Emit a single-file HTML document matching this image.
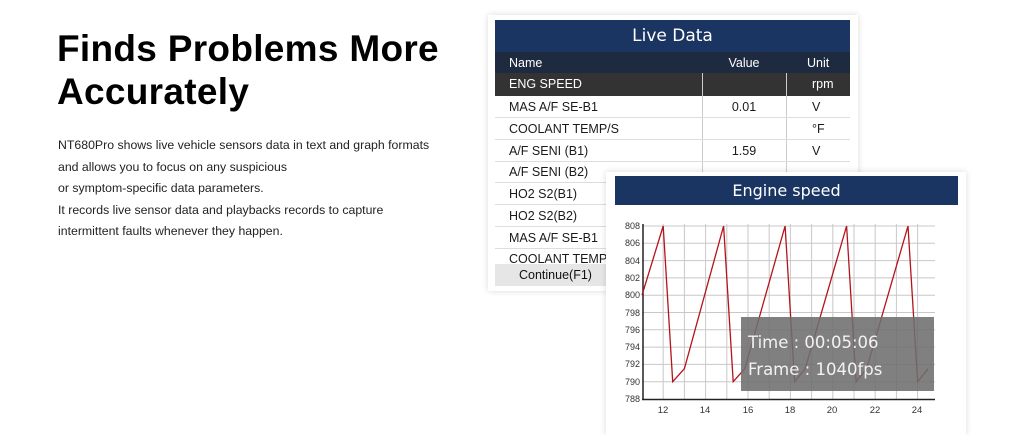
<!DOCTYPE html>
<html><head><meta charset="utf-8"><style>
*{margin:0;padding:0;box-sizing:border-box}
body{width:1024px;height:435px;background:#fff;font-family:"Liberation Sans","DejaVu Sans",sans-serif;position:relative;overflow:hidden;color:#111}
h1{position:absolute;left:57px;top:27px;font-size:37px;line-height:43px;font-weight:bold;color:#000;letter-spacing:0.3px}
.p{position:absolute;left:58px;top:135px;font-size:12.3px;line-height:21.5px;color:#222}
.card1{position:absolute;left:488px;top:15px;width:370px;height:276px;background:#fff;box-shadow:0 0 6px rgba(0,0,0,.15)}
.hd{position:absolute;left:495px;top:20px;width:355px;height:32px;background:#1b3563;color:#fff;font-size:17px;text-align:center;line-height:33px;font-family:"DejaVu Sans",sans-serif;font-weight:normal}
.row{position:absolute;left:495px;width:355px;height:22px;font-size:12.5px;line-height:22px;border-bottom:1px solid #ddd;color:#1a1a1a}
.row span{position:absolute}
.n{left:14px}.v{left:207px;width:84px;text-align:center}.u{left:300px;width:55px;padding-left:17px}
.ch{background:#1e2a3f;color:#fff;border:0;height:21px}
.eng{background:#333;color:#fff;border:0;height:23px}
.card2{position:absolute;left:606px;top:172px;width:360px;height:263px;background:#fff;box-shadow:0 0 6px rgba(0,0,0,.15)}
.hd2{position:absolute;left:615px;top:176px;width:343px;height:29px;background:#1b3563;color:#fff;font-size:16px;text-align:center;line-height:29px;font-family:"DejaVu Sans",sans-serif}
</style></head><body>
<h1>Finds Problems More<br>Accurately</h1>
<div class="p">NT680Pro shows live vehicle sensors data in text and graph formats<br>and allows you to focus on any suspicious<br>or symptom-specific data parameters.<br>It records live sensor data and playbacks records to capture<br>intermittent faults whenever they happen.</div>

<div class="card1"></div>
<div class="hd">Live Data</div>
<div class="row ch" style="top:52px"><span class="n">Name</span><span class="v">Value</span><span class="u" style="padding-left:12px">Unit</span></div>
<div class="row eng" style="top:73px"><span class="n">ENG SPEED</span><span class="u">rpm</span></div>
<div style="position:absolute;left:702px;top:73px;width:1px;height:110px;background:#ccc"></div>
<div style="position:absolute;left:786px;top:73px;width:1px;height:110px;background:#ccc"></div>
<div class="row" style="top:96px"><span class="n">MAS A/F SE-B1</span><span class="v">0.01</span><span class="u">V</span></div>
<div class="row" style="top:118px"><span class="n">COOLANT TEMP/S</span><span class="u">°F</span></div>
<div class="row" style="top:140px"><span class="n">A/F SENI (B1)</span><span class="v">1.59</span><span class="u">V</span></div>
<div class="row" style="top:161px"><span class="n">A/F SENI (B2)</span></div>
<div class="row" style="top:183px"><span class="n">HO2 S2(B1)</span></div>
<div class="row" style="top:205px"><span class="n">HO2 S2(B2)</span></div>
<div class="row" style="top:227px"><span class="n">MAS A/F SE-B1</span></div>
<div class="row" style="top:248px;border:0"><span class="n">COOLANT TEMP/S</span></div>
<div style="position:absolute;left:495px;top:264px;width:120px;height:22px;background:#e6e6e6;font-size:12.5px;line-height:22px;padding-left:24px">Continue(F1)</div>

<div class="card2"></div>
<div class="hd2">Engine speed</div>
<svg style="position:absolute;left:0;top:0" width="1024" height="435">
<g stroke="#c8c8c8" stroke-width="1">
<line x1="642" y1="226" x2="935" y2="226"/><line x1="642" y1="243.3" x2="935" y2="243.3"/><line x1="642" y1="260.6" x2="935" y2="260.6"/><line x1="642" y1="277.9" x2="935" y2="277.9"/><line x1="642" y1="295.2" x2="935" y2="295.2"/><line x1="642" y1="312.5" x2="935" y2="312.5"/><line x1="642" y1="329.8" x2="935" y2="329.8"/><line x1="642" y1="347.1" x2="935" y2="347.1"/><line x1="642" y1="364.4" x2="935" y2="364.4"/><line x1="642" y1="381.7" x2="935" y2="381.7"/>
<line x1="663.2" y1="224" x2="663.2" y2="399"/><line x1="684.4" y1="224" x2="684.4" y2="399"/><line x1="705.6" y1="224" x2="705.6" y2="399"/><line x1="726.8" y1="224" x2="726.8" y2="399"/><line x1="748" y1="224" x2="748" y2="399"/><line x1="769.2" y1="224" x2="769.2" y2="399"/><line x1="790.4" y1="224" x2="790.4" y2="399"/><line x1="811.6" y1="224" x2="811.6" y2="399"/><line x1="832.8" y1="224" x2="832.8" y2="399"/><line x1="854" y1="224" x2="854" y2="399"/><line x1="875.2" y1="224" x2="875.2" y2="399"/><line x1="896.4" y1="224" x2="896.4" y2="399"/><line x1="917.6" y1="224" x2="917.6" y2="399"/>
</g>
<line x1="643" y1="224" x2="643" y2="400" stroke="#222" stroke-width="1.5"/>
<line x1="642" y1="399.5" x2="935" y2="399.5" stroke="#222" stroke-width="1.5"/>
<polyline fill="none" stroke="#b3141c" stroke-width="1.3" points="642,295.2 663.2,226 672.7,381.7 684.4,368.7 723.6,226 733.2,381.7 744.8,368.7 785.1,226 794.6,381.7 805.2,368.7 846.6,226 856.1,381.7 866.7,368.7 908,226 917.6,381.7 928.2,368.7"/>
<g font-size="9" fill="#333" text-anchor="end" font-family="Liberation Sans,sans-serif">
<text x="640" y="229">808</text><text x="640" y="246">806</text><text x="640" y="264">804</text><text x="640" y="281">802</text><text x="640" y="298">800</text><text x="640" y="316">798</text><text x="640" y="333">796</text><text x="640" y="350">794</text><text x="640" y="367">792</text><text x="640" y="385">790</text><text x="640" y="402">788</text>
</g>
<g font-size="9.5" fill="#333" text-anchor="middle" font-family="Liberation Sans,sans-serif">
<text x="663" y="413">12</text><text x="705" y="413">14</text><text x="748" y="413">16</text><text x="790" y="413">18</text><text x="832" y="413">20</text><text x="875" y="413">22</text><text x="917" y="413">24</text>
</g>
<rect x="741" y="317" width="193" height="74" fill="#6e6e6e" fill-opacity="0.88"/>
<text x="748" y="348" font-size="16.5" fill="#f2f2f2" font-family="DejaVu Sans,sans-serif">Time : 00:05:06</text>
<text x="748" y="375" font-size="16.5" fill="#f2f2f2" font-family="DejaVu Sans,sans-serif">Frame : 1040fps</text>
</svg>
</body></html>
